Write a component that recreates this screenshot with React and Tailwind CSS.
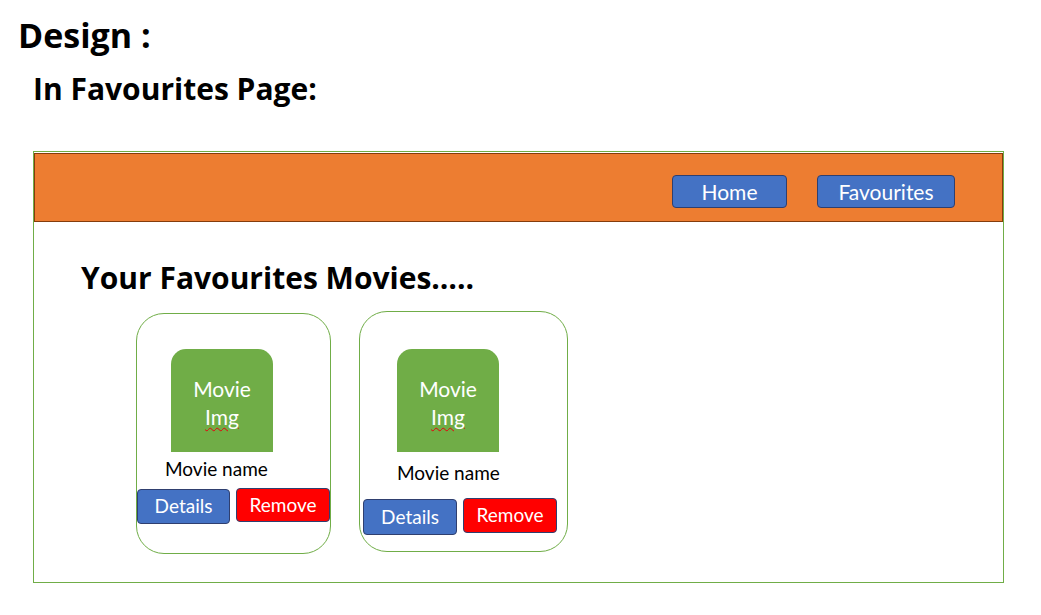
import React from 'react';

const font = { fontFamily: 'Lato, "Open Sans", sans-serif' };
const headFont = { fontFamily: '"Open Sans", "Noto Sans", sans-serif' };

const MovieCard = ({ boxClass, imgClass, nameClass, rowClass, detailsClass, removeClass }) => {
  return (
    <div className={`border border-[#70ad47] rounded-[28px] bg-white flex flex-col ${boxClass}`}>
      <div
        className={`w-[102px] h-[103px] bg-[#70ad47] rounded-t-[15px] pt-[5px] flex flex-col items-center justify-center text-white text-[21px] leading-[28px] ${imgClass}`}
      >
        <span>Movie</span>
        <span className="underline decoration-wavy decoration-red-600 decoration-1 underline-offset-2">Img</span>
      </div>
      <div className={`text-[19px] leading-[22px] text-black ${nameClass}`}>Movie name</div>
      <div className={`flex ${rowClass}`}>
        <button
          className={`bg-[#4472c4] text-white text-[19px] border border-[#2f3f6f] rounded-[4px] flex items-center justify-center ${detailsClass}`}
        >
          Details
        </button>
        <button
          className={`bg-[#ff0000] text-white text-[19px] border border-[#2f3f6f] rounded-[4px] flex items-center justify-center ${removeClass}`}
        >
          Remove
        </button>
      </div>
    </div>
  );
};

const App = () => {
  return (
    <div className="w-[1041px] h-[615px] bg-white overflow-hidden" style={font}>
      <h1 className="pl-[18px] pt-[15px] text-[34px] leading-[40px] font-bold text-black" style={headFont}>
        Design :
      </h1>
      <h2 className="pl-[33px] pt-[16px] text-[30px] leading-[36px] font-bold text-black" style={headFont}>
        In Favourites Page:
      </h2>

      {/* page frame */}
      <div className="ml-[33px] mt-[44px] w-[971px] h-[432px] border border-[#70ad47] pt-px">
        <div className="h-[69px] bg-[#ed7d31] border border-[#843c0c] flex items-center justify-end pr-[47px] gap-[30px] pt-[7px]">
          <button className="w-[115px] h-[33px] bg-[#4472c4] border border-[#2f3f6f] rounded-[4px] text-white text-[21px]">
            Home
          </button>
          <button className="w-[138px] h-[33px] bg-[#4472c4] border border-[#2f3f6f] rounded-[4px] text-white text-[21px]">
            Favourites
          </button>
        </div>

        <h3 className="pl-[47px] pt-[38px] text-[30px] leading-[36px] font-bold text-black" style={headFont}>
          Your Favourites Movies…..
        </h3>

        <div className="flex items-start pl-[102px] mt-[15px] gap-[28px]">
          <MovieCard
            boxClass="w-[195px] h-[241px] mt-[2px]"
            imgClass="ml-[34px] mt-[35px]"
            nameClass="ml-[28px] mt-[6px]"
            rowClass="mt-[8px] gap-[6px] items-start"
            detailsClass="w-[93px] h-[35px] mt-px"
            removeClass="w-[94px] h-[34px]"
          />
          <MovieCard
            boxClass="w-[209px] h-[241px]"
            imgClass="ml-[37px] mt-[37px]"
            nameClass="ml-[37px] mt-[10px]"
            rowClass="ml-[3px] mt-[14px] gap-[6px] items-start"
            detailsClass="w-[94px] h-[36px] mt-px"
            removeClass="w-[94px] h-[35px]"
          />
        </div>
      </div>
    </div>
  );
};

export default App;
